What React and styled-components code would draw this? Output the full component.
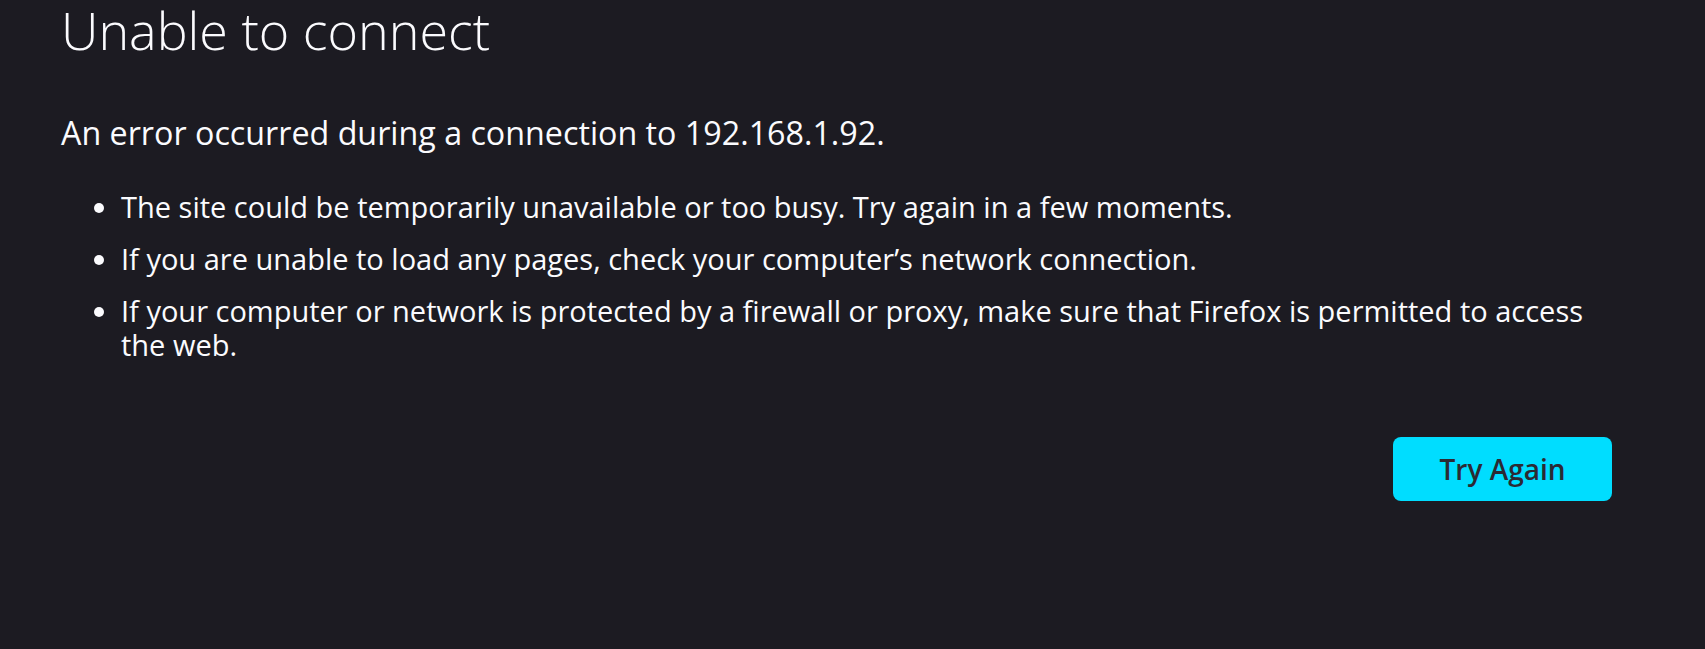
import React from "react";
import styled, { createGlobalStyle } from "styled-components";

const GlobalStyle = createGlobalStyle`
  html, body {
    margin: 0;
    padding: 0;
    background: #1c1b22;
  }
  body {
    font-family: "Open Sans", "Noto Sans", sans-serif;
    color: #fbfbfe;
  }
`;

const Page = styled.main`
  box-sizing: border-box;
  width: 1705px;
  min-height: 649px;
  padding: 0 93px 0 61px;
  display: flex;
  flex-direction: column;
`;

const Title = styled.h1`
  margin: 0;
  font-size: 52px;
  line-height: 60px;
  font-weight: 350;
`;

const Intro = styled.p`
  margin: 53px 0 0;
  font-size: 32.25px;
  line-height: 40px;
  font-weight: 400;
`;

const Hints = styled.ul`
  margin: 37px 0 0;
  padding: 0 0 0 60px;
  font-size: 29px;
  line-height: 34px;
`;

const Hint = styled.li`
  margin-bottom: 18px;

  &:last-child {
    margin-bottom: 0;
  }
`;

const Actions = styled.div`
  display: flex;
  justify-content: flex-end;
  margin-top: 75px;
`;

const RetryButton = styled.button`
  width: 219px;
  height: 64px;
  border: none;
  border-radius: 8px;
  background: #00ddff;
  color: #2b2a33;
  font-family: "Open Sans", "Noto Sans", sans-serif;
  font-size: 28px;
  font-weight: 600;
  cursor: pointer;

  &:hover {
    background: #80ebff;
  }
`;

export default function App() {
  return (
    <>
      <GlobalStyle />
      <Page>
        <Title>Unable to connect</Title>
        <Intro>An error occurred during a connection to 192.168.1.92.</Intro>
        <Hints>
          <Hint>The site could be temporarily unavailable or too busy. Try again in a few moments.</Hint>
          <Hint>If you are unable to load any pages, check your computer’s network connection.</Hint>
          <Hint>
            If your computer or network is protected by a firewall or proxy, make sure that Firefox is
            permitted to access the web.
          </Hint>
        </Hints>
        <Actions>
          <RetryButton type="button">Try Again</RetryButton>
        </Actions>
      </Page>
    </>
  );
}
